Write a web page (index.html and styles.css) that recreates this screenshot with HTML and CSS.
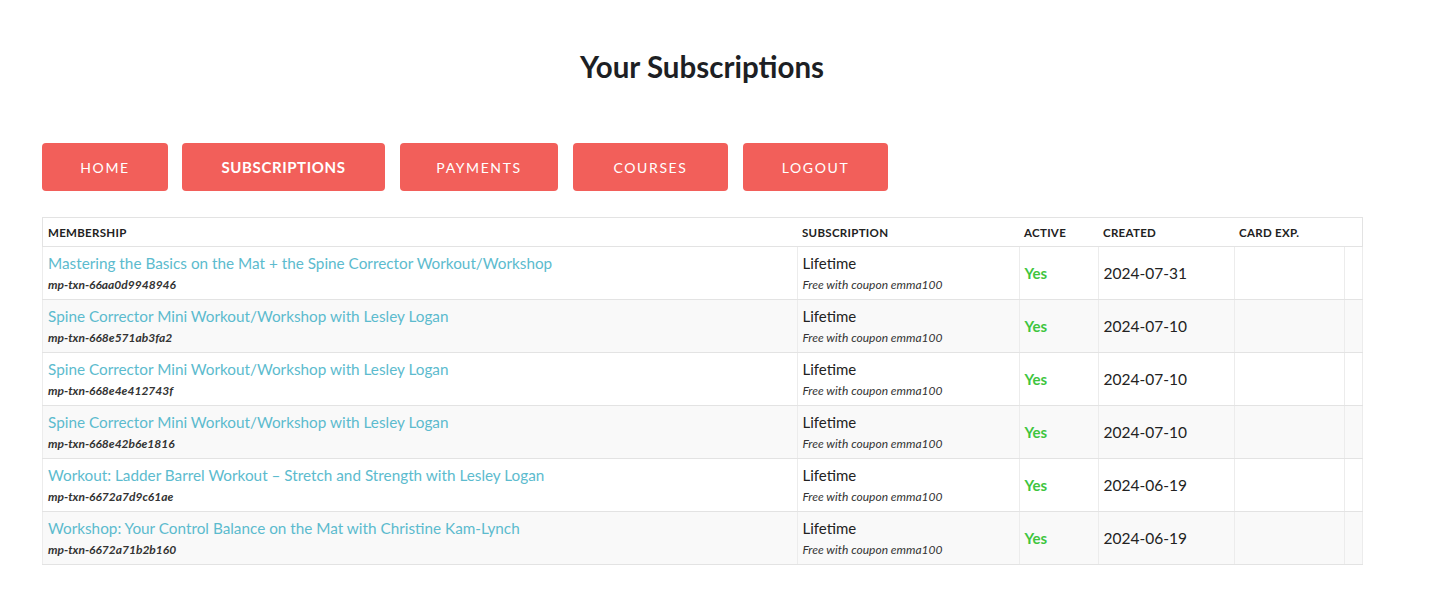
FILE: index.html
```html
<!DOCTYPE html>
<html>
<head>
<meta charset="utf-8">
<link rel="stylesheet" href="styles.css">
</head>
<body>
<div class="page">
  <h1 class="title">Your Subscriptions</h1>
  <nav class="nav">
    <a class="btn btn-home">HOME</a>
    <a class="btn btn-subs active">SUBSCRIPTIONS</a>
    <a class="btn btn-pay">PAYMENTS</a>
    <a class="btn btn-courses">COURSES</a>
    <a class="btn btn-logout">LOGOUT</a>
  </nav>
  <table class="subs">
    <thead>
      <tr>
        <th class="c-mem">MEMBERSHIP</th>
        <th class="c-sub">SUBSCRIPTION</th>
        <th class="c-act">ACTIVE</th>
        <th class="c-cre">CREATED</th>
        <th class="c-card">CARD EXP.</th>
        <th class="c-extra"></th>
      </tr>
    </thead>
    <tbody>
      <tr>
        <td><a class="link">Mastering the Basics on the Mat + the Spine Corrector Workout/Workshop</a><div class="txn">mp-txn-66aa0d9948946</div></td>
        <td><div class="plan">Lifetime</div><div class="coupon">Free with coupon emma100</div></td>
        <td class="yes">Yes</td>
        <td class="date">2024-07-31</td>
        <td></td>
        <td></td>
      </tr>
      <tr>
        <td><a class="link">Spine Corrector Mini Workout/Workshop with Lesley Logan</a><div class="txn">mp-txn-668e571ab3fa2</div></td>
        <td><div class="plan">Lifetime</div><div class="coupon">Free with coupon emma100</div></td>
        <td class="yes">Yes</td>
        <td class="date">2024-07-10</td>
        <td></td>
        <td></td>
      </tr>
      <tr>
        <td><a class="link">Spine Corrector Mini Workout/Workshop with Lesley Logan</a><div class="txn">mp-txn-668e4e412743f</div></td>
        <td><div class="plan">Lifetime</div><div class="coupon">Free with coupon emma100</div></td>
        <td class="yes">Yes</td>
        <td class="date">2024-07-10</td>
        <td></td>
        <td></td>
      </tr>
      <tr>
        <td><a class="link">Spine Corrector Mini Workout/Workshop with Lesley Logan</a><div class="txn">mp-txn-668e42b6e1816</div></td>
        <td><div class="plan">Lifetime</div><div class="coupon">Free with coupon emma100</div></td>
        <td class="yes">Yes</td>
        <td class="date">2024-07-10</td>
        <td></td>
        <td></td>
      </tr>
      <tr>
        <td><a class="link">Workout: Ladder Barrel Workout – Stretch and Strength with Lesley Logan</a><div class="txn">mp-txn-6672a7d9c61ae</div></td>
        <td><div class="plan">Lifetime</div><div class="coupon">Free with coupon emma100</div></td>
        <td class="yes">Yes</td>
        <td class="date">2024-06-19</td>
        <td></td>
        <td></td>
      </tr>
      <tr>
        <td><a class="link">Workshop: Your Control Balance on the Mat with Christine Kam-Lynch</a><div class="txn">mp-txn-6672a71b2b160</div></td>
        <td><div class="plan">Lifetime</div><div class="coupon">Free with coupon emma100</div></td>
        <td class="yes">Yes</td>
        <td class="date">2024-06-19</td>
        <td></td>
        <td></td>
      </tr>
    </tbody>
  </table>
</div>
</body>
</html>
```
FILE: styles.css
```css
html, body {
  margin: 0;
  padding: 0;
  background: #ffffff;
}
body {
  font-family: "Lato", "Open Sans", sans-serif;
  color: #222222;
}
.page {
  width: 1320px;
  padding-left: 42px;
}
.title {
  margin: 0;
  padding-top: 49px;
  height: 94px;
  box-sizing: border-box;
  text-align: center;
  font-size: 29.5px;
  font-weight: 700;
  color: #1d1f24;
  line-height: 36px;
}
.nav {
  display: flex;
  padding-top: 49px;
  gap: 14px;
}
.btn {
  display: flex;
  align-items: center;
  justify-content: center;
  height: 48px;
  border-radius: 4px;
  background: #f25f5a;
  color: #ffffff;
  font-size: 14px;
  letter-spacing: 1.6px;
  font-weight: 400;
  box-sizing: border-box;
}
.btn.active { font-weight: 700; letter-spacing: 0.6px; font-size: 15px; }
.btn-home { width: 126px; }
.btn-subs { width: 203px; }
.btn-pay { width: 158px; margin-left: 1px; }
.btn-courses { width: 155px; margin-left: 1px; }
.btn-logout { width: 145px; margin-left: 1px; }

.subs {
  margin-top: 26px;
  width: 1319px;
  border-collapse: collapse;
  border: 1px solid #e3e3e3;
  table-layout: fixed;
}
.subs th {
  height: 28px;
  padding: 0 5px;
  text-align: left;
  font-size: 11.5px;
  font-weight: 700;
  color: #222;
  letter-spacing: 0.3px;
  border-bottom: 1px solid #e3e3e3;
}
.c-mem { width: 744px; }
.c-sub { width: 212px; }
.c-act { width: 69px; }
.c-cre { width: 126px; }
.c-card { width: 100px; }
.c-extra { width: 8px; }
.subs td {
  height: 52px;
  padding: 0 5px;
  vertical-align: middle;
  border: 1px solid #ececec;
  border-top-color: #e3e3e3;
  border-bottom: 1px solid #e3e3e3;
}
.subs tbody tr:nth-child(even) td { background: #f9f9f9; }
.link {
  display: block;
  font-size: 15.3px;
  color: #5cbbce;
  line-height: 20px;
}
.txn {
  font-size: 12px;
  font-style: italic;
  font-weight: 700;
  color: #333;
  line-height: 17px;
  margin-top: 3px;
}
.plan {
  font-size: 15px;
  color: #222;
  line-height: 20px;
}
.coupon {
  font-size: 12px;
  font-style: italic;
  color: #333;
  line-height: 17px;
  margin-top: 3px;
}
.yes {
  color: #3ec53e;
  font-weight: 700;
  font-size: 15px;
}
.date {
  font-size: 15.5px;
  color: #222;
}
```
